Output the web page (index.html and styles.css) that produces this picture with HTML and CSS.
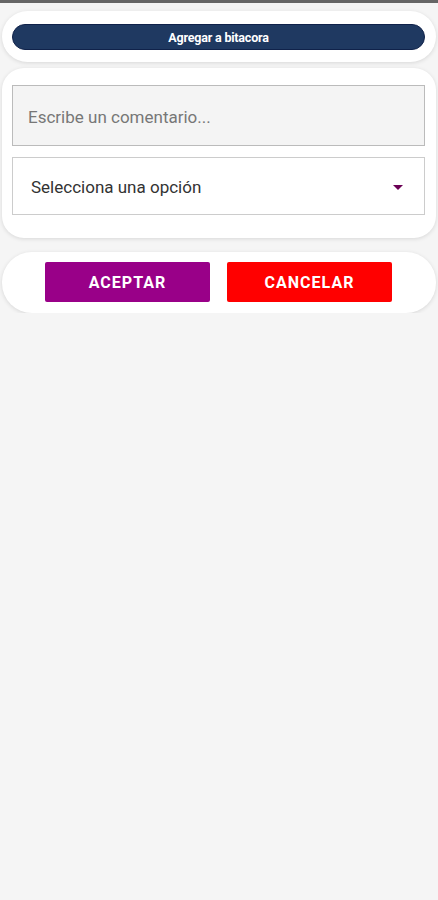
FILE: index.html
```html
<!DOCTYPE html>
<html lang="es">

<head>
    <meta charset="UTF-8">
    <meta name="viewport" content="width=device-width, initial-scale=1.0">
    <title>Bitacora</title>
    <link rel="stylesheet" href="styles.css">
</head>

<body>
    <div class="topbar"></div>

    <div class="card card-header">
        <div class="title-pill">Agregar a bitacora</div>
    </div>

    <div class="card card-form">
        <input type="text" class="comment" placeholder="Escribe un comentario..." />
        <div class="select-box">
            <span>Selecciona una opción</span>
            <span class="arrow"></span>
        </div>
    </div>

    <div class="card card-actions">
        <button class="btn btn-accept">ACEPTAR</button>
        <button class="btn btn-cancel">CANCELAR</button>
    </div>
</body>

</html>
```

FILE: styles.css
```css
body {
    margin: 0;
    background-color: #f5f5f5;
    font-family: Roboto, "Liberation Sans", Arial, sans-serif;
}

.topbar {
    height: 3px;
    background-color: #666;
}

.card {
    margin: 0 2px;
    background-color: #fff;
    box-shadow: 0px 1px 4px rgba(0, 0, 0, 0.12);
}

.card-header {
    margin-top: 8px;
    padding: 13px 11px 12px 10px;
    border-radius: 26px;
}

.title-pill {
    height: 26px;
    line-height: 25px;
    background-color: #1f3961;
    border: 1px solid #10224a;
    box-sizing: border-box;
    border-radius: 13px;
    color: #fff;
    text-align: center;
    font-size: 12.5px;
    font-weight: bold;
    letter-spacing: -0.2px;
}

.card-form {
    margin-top: 6px;
    padding: 17px 11px 23px 10px;
    border-radius: 22px;
    display: flex;
    flex-direction: column;
    gap: 11px;
}

.comment {
    height: 61px;
    width: 100%;
    box-sizing: border-box;
    border: 1px solid #bbb;
    background-color: #f4f4f4;
    padding: 3px 15px 0;
    font-family: Roboto, "Liberation Sans", Arial, sans-serif;
    font-size: 17px;
    color: #333;
    outline: none;
}

.comment::placeholder {
    color: #777;
}

.select-box {
    height: 58px;
    box-sizing: border-box;
    border: 1px solid #ccc;
    padding: 2px 21px 0 18px;
    display: flex;
    align-items: center;
    justify-content: space-between;
    font-size: 17px;
    color: #333;
}

.arrow {
    width: 0;
    height: 0;
    border-left: 5px solid transparent;
    border-right: 5px solid transparent;
    border-top: 5px solid #6b0055;
}

.card-actions {
    margin-top: 14px;
    padding: 10px 1px 11px 0;
    border-radius: 30px;
    display: flex;
    justify-content: center;
    gap: 17px;
}

.btn {
    width: 165px;
    height: 40px;
    border: none;
    border-radius: 2px;
    color: #fff;
    font-family: Roboto, "Liberation Sans", Arial, sans-serif;
    font-size: 16px;
    font-weight: bold;
    letter-spacing: 1px;
    cursor: pointer;
}

.btn-accept {
    background-color: #990088;
}

.btn-cancel {
    background-color: #ff0000;
}
```
